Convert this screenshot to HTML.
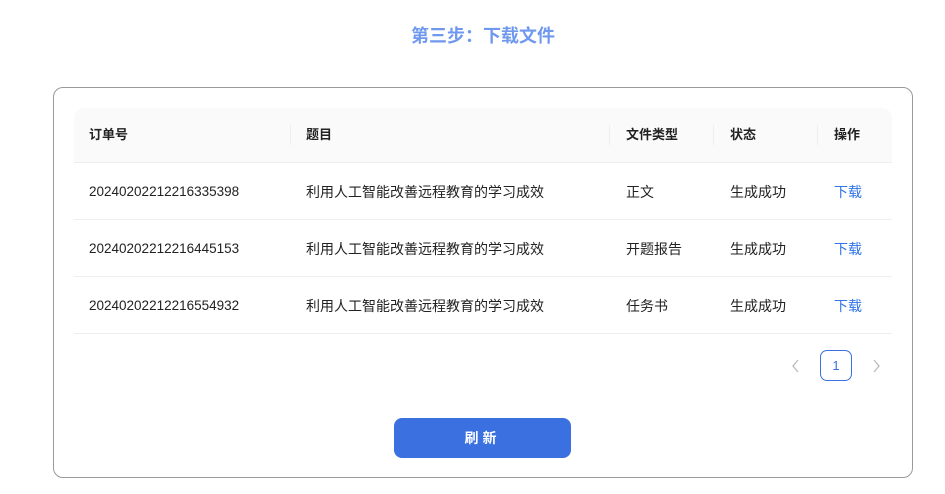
<!DOCTYPE html>
<html><head><meta charset="utf-8"><style>
*{margin:0;padding:0;box-sizing:border-box}
body{width:945px;height:494px;background:#fff;font-family:"Liberation Sans","Noto Sans CJK SC",sans-serif;position:relative;overflow:hidden;color:#222}
.title{position:absolute;top:22px;left:0;width:966px;text-align:center;font-size:18px;font-weight:bold;color:#6f98ee}
.card{position:absolute;left:53px;top:87px;width:860px;height:391px;border:1px solid #9a9a9a;border-radius:10px}
.row{position:absolute;left:74px;width:818px;height:57px;border-bottom:1px solid #eee;font-size:14px}
.row div{position:absolute;top:0;line-height:58px}
.head{top:108px;height:55px;background:#fafafa;border-radius:10px 10px 0 0;font-weight:bold;font-size:13px}
.head div{line-height:54px}
.sep{position:absolute;top:17px;width:1px;height:20px;background:#eee}
.c1{left:15px}.c2{left:232px}.c3{left:552px}.c4{left:656px}.c5{left:760px}
.row .c1.n{font-size:13.5px}
.a{color:#2f74e8}
.pg{position:absolute;left:820px;top:350px;width:32px;height:31px;border:1px solid #3a70e0;border-radius:7px;text-align:center;line-height:29px;font-size:13px;color:#3a70e0}
.btn{position:absolute;left:394px;top:418px;width:177px;height:40px;background:#3a70e0;border-radius:8px;color:#fff;text-align:center;line-height:40px;font-size:14px;font-weight:bold;letter-spacing:4px}
</style></head><body>
<div class="title">第三步：下载文件</div>
<div class="card"></div>
<div class="row head"><div class="c1">订单号</div><span class="sep" style="left:216px"></span><div class="c2">题目</div><span class="sep" style="left:535px"></span><div class="c3">文件类型</div><span class="sep" style="left:639px"></span><div class="c4">状态</div><span class="sep" style="left:743px"></span><div class="c5">操作</div></div>
<div class="row" style="top:163px"><div class="c1 n">20240202212216335398</div><div class="c2">利用人工智能改善远程教育的学习成效</div><div class="c3">正文</div><div class="c4">生成成功</div><div class="c5 a">下载</div></div>
<div class="row" style="top:220px"><div class="c1 n">20240202212216445153</div><div class="c2">利用人工智能改善远程教育的学习成效</div><div class="c3">开题报告</div><div class="c4">生成成功</div><div class="c5 a">下载</div></div>
<div class="row" style="top:277px"><div class="c1 n">20240202212216554932</div><div class="c2">利用人工智能改善远程教育的学习成效</div><div class="c3">任务书</div><div class="c4">生成成功</div><div class="c5 a">下载</div></div>
<svg style="position:absolute;left:791px;top:359px" width="10" height="14"><path d="M7 1L2 7L7 13" stroke="#bbb" stroke-width="1.3" fill="none"/></svg>
<div class="pg">1</div>
<svg style="position:absolute;left:872px;top:359px" width="10" height="14"><path d="M2 1L7 7L2 13" stroke="#bbb" stroke-width="1.3" fill="none"/></svg>
<div class="btn">刷新</div>
</body></html>
